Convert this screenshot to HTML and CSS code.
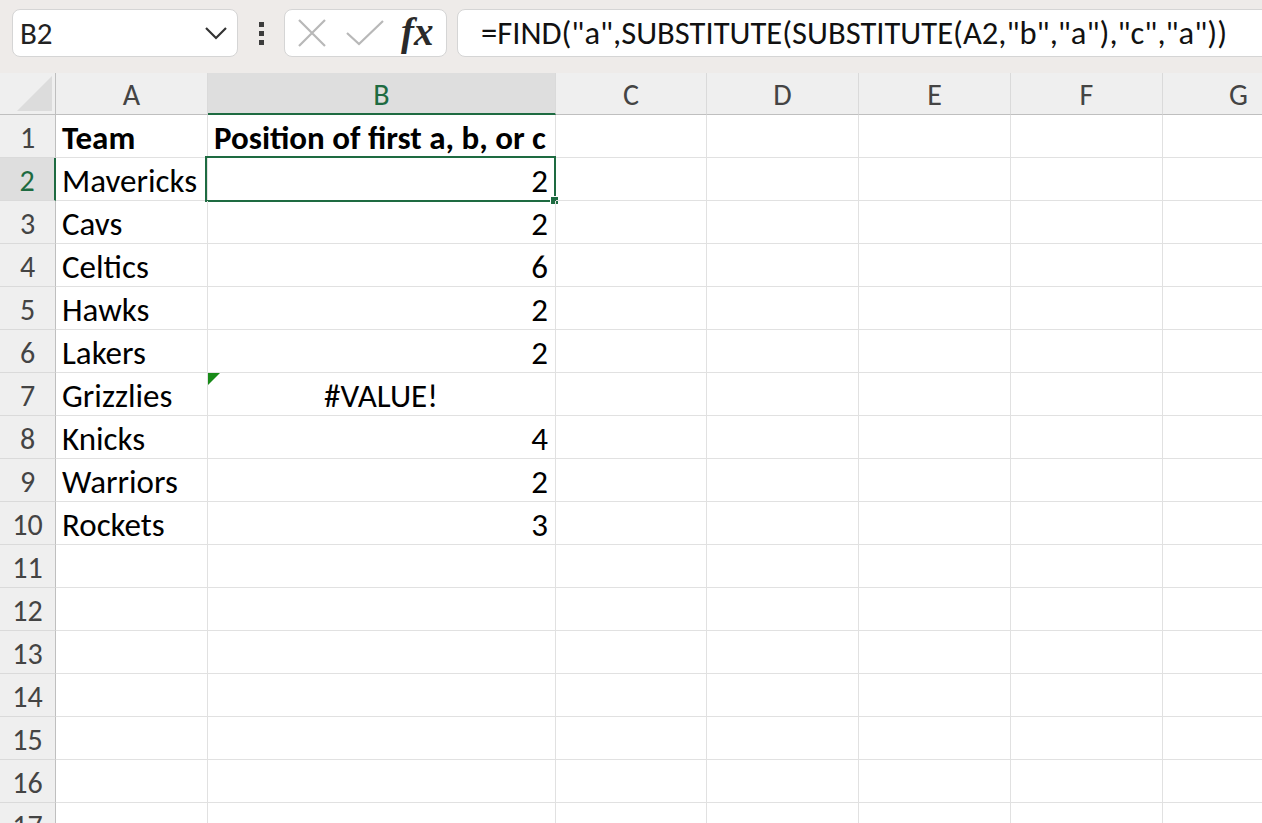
FILE: index.html
```html
<!DOCTYPE html>
<html lang="en">
<head>
  <meta charset="UTF-8">
  <meta name="viewport" content="width=device-width, initial-scale=1.0">
  <title>Book1 - Excel</title>
  <link rel="stylesheet" href="styles.css">
</head>
<body>

  <!-- Name box + formula bar -->
  <div class="toolbar">
    <div class="namebox">
      <span>B2</span>
      <svg class="chevron" width="24" height="14" viewBox="0 0 24 14"><path d="M2 2 L12 12 L22 2" fill="none" stroke="#333" stroke-width="2.2"/></svg>
    </div>
    <div class="kebab"><i></i><i></i><i></i></div>
    <div class="fbuttons">
      <svg width="30" height="30" viewBox="0 0 30 30"><path d="M2 2 L28 28 M28 2 L2 28" stroke="#b8b8b8" stroke-width="2.2" fill="none"/></svg>
      <svg width="38" height="28" viewBox="0 0 38 28"><path d="M1 14 L13 25 L37 2" stroke="#b8b8b8" stroke-width="2.2" fill="none"/></svg>
      <span class="fx">fx</span>
    </div>
    <div class="formula">=FIND("a",SUBSTITUTE(SUBSTITUTE(A2,"b","a"),"c","a"))</div>
  </div>

  <!-- Worksheet grid -->
  <div class="sheet" id="sheet"></div>

  <script>
    const cols = ['A', 'B', 'C', 'D', 'E', 'F', 'G'];
    const data = [
      ['Team', 'Position of first a, b, or c'],
      ['Mavericks', 2],
      ['Cavs', 2],
      ['Celtics', 6],
      ['Hawks', 2],
      ['Lakers', 2],
      ['Grizzlies', '#VALUE!'],
      ['Knicks', 4],
      ['Warriors', 2],
      ['Rockets', 3]
    ];
    const sheet = document.getElementById('sheet');

    // column headers
    let html = '<div class="corner"><span class="tri"></span></div>';
    cols.forEach(c => {
      html += `<div class="colhead${c === 'B' ? ' sel' : ''}">${c}</div>`;
    });

    // rows
    for (let r = 1; r <= 17; r++) {
      const row = data[r - 1] || [];
      html += `<div class="rowhead${r === 2 ? ' sel' : ''}">${r}</div>`;
      cols.forEach((c, i) => {
        const v = row[i];
        let cls = 'cell';
        let inner = v === undefined ? '' : v;
        if (r === 1 && v !== undefined) cls += ' bold';
        if (typeof v === 'number') cls += ' num';
        if (v === '#VALUE!') {
          cls += ' err';
          inner = '<span class="flag"></span>' + v;
        }
        if (r === 2 && c === 'B') inner += '<span class="active"><span class="handle"></span></span>';
        html += `<div class="${cls}">${inner}</div>`;
      });
    }
    sheet.innerHTML = html;
  </script>
</body>
</html>
```

FILE: styles.css
```css
body {
  margin: 0;
  padding: 0;
  background-color: #fff;
  font-family: Carlito, Lato, "Liberation Sans", sans-serif;
  overflow: hidden;
  width: 1262px;
  height: 823px;
}
.toolbar {
  display: flex;
  align-items: center;
  height: 73px;
  padding: 0 0 7px 12px;
  box-sizing: border-box;
  background-color: #eeebe9;
  white-space: nowrap;
  overflow: hidden;
}
.toolbar > * {
  flex-shrink: 0;
}
.namebox {
  display: flex;
  align-items: center;
  justify-content: space-between;
  width: 226px;
  height: 48px;
  box-sizing: border-box;
  padding: 0 9px 0 7px;
  background-color: #fff;
  border: 1px solid #d5d5d5;
  border-radius: 8px;
  font-size: 31px;
  color: #222;
}
.kebab {
  display: flex;
  flex-direction: column;
  gap: 4px;
  width: 46px;
  align-items: center;
}
.kebab i {
  display: block;
  width: 5px;
  height: 5px;
  background-color: #3c3c3c;
}
.fbuttons {
  display: flex;
  align-items: center;
  width: 163px;
  height: 48px;
  box-sizing: border-box;
  padding: 0 0 0 12px;
  background-color: #fff;
  border: 1px solid #d5d5d5;
  border-radius: 8px;
}
.fbuttons svg + svg {
  margin-left: 19px;
}
.fx {
  font-family: "Liberation Serif", serif;
  font-style: italic;
  font-weight: bold;
  font-size: 39px;
  color: #2a2a2a;
  margin-left: 17px;
  margin-top: -4px;
}
.formula {
  margin-left: 10px;
  width: 860px;
  height: 48px;
  box-sizing: border-box;
  padding: 0 0 0 23px;
  line-height: 47px;
  background-color: #fff;
  border: 1px solid #d5d5d5;
  border-radius: 8px;
  font-size: 32.6px;
  color: #111;
}
.sheet {
  display: grid;
  grid-template-columns: 56px 152px 348px 151px 152px 152px 152px 152px;
  grid-template-rows: 42px;
  grid-auto-rows: 43px;
  font-size: 33px;
}
.corner, .colhead, .rowhead, .cell {
  box-sizing: border-box;
  border-right: 1px solid #e1e1e1;
  border-bottom: 1px solid #e1e1e1;
  position: relative;
}
.corner {
  background-color: #efefef;
  border-right-color: #bfbfbf;
  border-bottom-color: #bfbfbf;
}
.tri {
  position: absolute;
  right: 3px;
  bottom: 3px;
  width: 0;
  height: 0;
  border-left: 35px solid transparent;
  border-bottom: 35px solid #dcdcdc;
}
.colhead {
  background-color: #efefef;
  border-right-color: #dadada;
  border-bottom-color: #bfbfbf;
  text-align: center;
  line-height: 44px;
  font-size: 30px;
  color: #444;
}
.colhead.sel {
  background-color: #dedede;
  color: #1e6b41;
  border-bottom: 2px solid #1e6b41;
}
.rowhead {
  background-color: #efefef;
  border-right-color: #bfbfbf;
  border-bottom-color: #dadada;
  text-align: center;
  line-height: 46px;
  font-size: 30px;
  color: #444;
}
.rowhead.sel {
  background-color: #dedede;
  color: #1e6b41;
  border-right: 2px solid #1e6b41;
}
.cell {
  padding: 0 7px 0 6px;
  line-height: 46px;
  color: #000;
  white-space: nowrap;
}
.cell.bold {
  font-weight: bold;
}
.cell.num {
  text-align: right;
}
.cell.err {
  text-align: center;
}
.flag {
  position: absolute;
  left: 0;
  top: 0;
  width: 0;
  height: 0;
  border-top: 12px solid #188a18;
  border-right: 12px solid transparent;
}
.active {
  position: absolute;
  left: -3px;
  top: -2px;
  right: -1px;
  bottom: -2px;
  border: 2px solid #1e6b41;
}
.handle {
  position: absolute;
  right: -5px;
  bottom: -5px;
  width: 7px;
  height: 7px;
  background-color: #1e6b41;
  border: 1px solid #fff;
}
```
